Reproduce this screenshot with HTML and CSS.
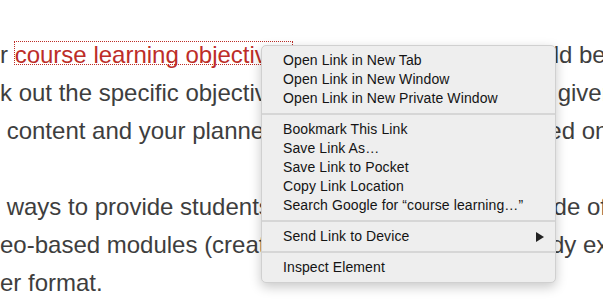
FILE: index.html
```html
<!DOCTYPE html>
<html>
<head>
<meta charset="utf-8">
<link rel="stylesheet" href="styles.css">
</head>
<body>
  <p class="copy">
    <span class="line">r <a class="link" href="#">course learning objectives</a> (what the students should be</span>
    <span class="line">k out the specific objectives that your adult learners, given</span>
    <span class="line">&nbsp;content and your planned course activities, are based on</span>
    <span class="line">&nbsp;</span>
    <span class="line">&nbsp;ways to provide students with essential content. Made of</span>
    <span class="line">eo-based modules (created with a video and the study ex</span>
    <span class="line">er format.</span>
  </p>

  <div class="menu" role="menu"> <!-- context menu over the link -->
    <div class="item">Open Link in New Tab</div>
    <div class="item">Open Link in New Window</div>
    <div class="item">Open Link in New Private Window</div>
    <div class="sep"></div>
    <div class="item">Bookmark This Link</div>
    <div class="item">Save Link As…</div>
    <div class="item">Save Link to Pocket</div>
    <div class="item">Copy Link Location</div>
    <div class="item">Search Google for “course learning…”</div>
    <div class="sep"></div>
    <div class="item sub">Send Link to Device</div>
    <div class="sep"></div>
    <div class="item">Inspect Element</div>
  </div>
</body>
</html>
```
FILE: styles.css
```css
html, body
{
  margin: 0;
  background: #fff;
  overflow: hidden;
}

body
{
  width: 603px;
  height: 303px;
  position: relative;
}

.copy
{
  margin: 0;
  padding-top: 36px;
  font: 24px/38px "Liberation Sans", Arial, sans-serif;
  color: #3e3e3e;
}

.copy .line
{
  display: block;
  white-space: nowrap;
  overflow: hidden;
}

.link /* focused link, dotted focus ring */
{
  display: inline-block;
  box-sizing: border-box;
  height: 22px;
  padding-top: 2px;
  line-height: 22px;
  color: #bd2d28;
  text-decoration: none;
  outline: 1px dotted #bd2d28;
}

/* context menu */

.menu
{
  position: absolute;
  left: 261px;
  top: 45px;
  width: 295px;
  box-sizing: border-box;
  padding: 5px 0;
  background: #eeeeee;
  border: 1px solid #d0d0d0;
  border-radius: 5px;
  box-shadow: 0 4px 12px rgba(0,0,0,0.22);
  font: 14px/19px "Liberation Sans", Arial, sans-serif;
  letter-spacing: 0.1px;
  color: #141414;
}

.menu > .item
{
  height: 19px;
  padding: 0 14px 0 21px;
  white-space: nowrap;
  position: relative;
}

.menu > .item.sub::after /* submenu arrow */
{
  content: "";
  position: absolute;
  right: 11px;
  top: 5px;
  border-left: 8px solid #222;
  border-top: 5px solid transparent;
  border-bottom: 5px solid transparent;
}

.menu > .sep
{
  height: 2px;
  margin: 5px 0;
  background: #d6d6d6;
}
```
